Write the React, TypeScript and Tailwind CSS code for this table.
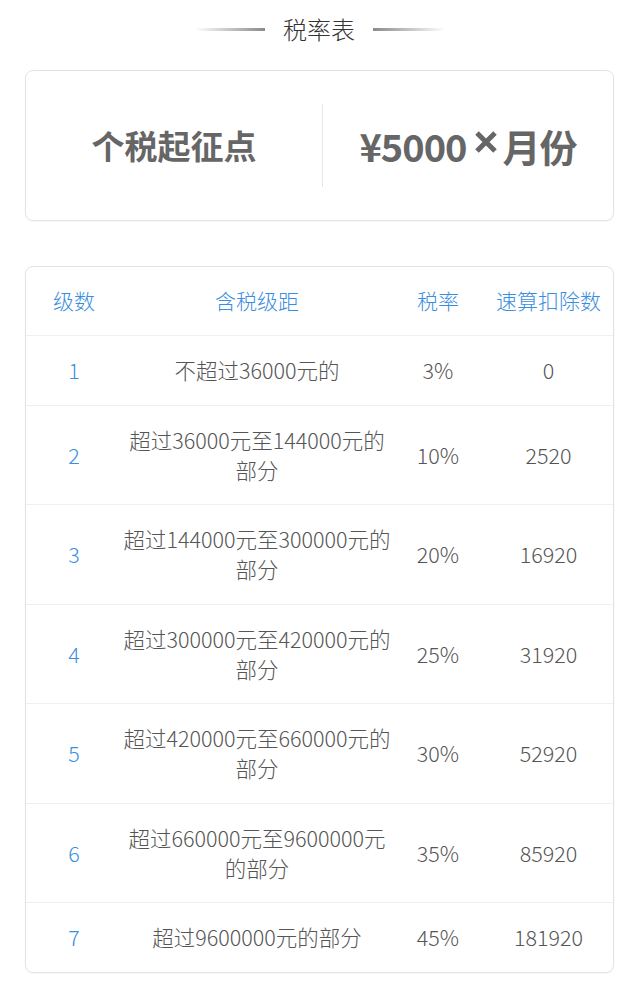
import React from 'react';

interface Bracket {
  level: number;
  range: string[];
  rate: string;
  deduction: string;
}

const brackets: Bracket[] = [
  { level: 1, range: ['不超过36000元的'], rate: '3%', deduction: '0' },
  { level: 2, range: ['超过36000元至144000元的', '部分'], rate: '10%', deduction: '2520' },
  { level: 3, range: ['超过144000元至300000元的', '部分'], rate: '20%', deduction: '16920' },
  { level: 4, range: ['超过300000元至420000元的', '部分'], rate: '25%', deduction: '31920' },
  { level: 5, range: ['超过420000元至660000元的', '部分'], rate: '30%', deduction: '52920' },
  { level: 6, range: ['超过660000元至9600000元', '的部分'], rate: '35%', deduction: '85920' },
  { level: 7, range: ['超过9600000元的部分'], rate: '45%', deduction: '181920' },
];

const font = { fontFamily: '"Noto Sans CJK SC", "Noto Sans", sans-serif' };

export default function App() {
  return (
    <div className="w-[640px] h-[990px] bg-white overflow-hidden" style={font}>
      {/* Title */}
      <div className="flex items-center justify-center h-[58px]">
        <div className="w-[70px] h-[3px] bg-gradient-to-r from-transparent to-[#8a8a8a]" />
        <div className="mx-[18px] text-[24px] leading-none text-[#333] font-light">税率表</div>
        <div className="w-[72px] h-[3px] bg-gradient-to-l from-transparent to-[#8a8a8a]" />
      </div>

      {/* Threshold card */}
      <div className="mt-[12px] ml-[25px] w-[589px] h-[151px] border border-[#e3e3e3] rounded-[8px] flex items-center shadow-[0_1px_2px_rgba(0,0,0,0.04)]">
        <div className="w-[296px] flex justify-center text-[33px] font-bold text-[#666] leading-none">
          个税起征点
        </div>
        <div className="w-px h-[83px] bg-[#e6e6e6]" />
        <div className="flex-1 flex justify-center items-center text-[38px] font-bold text-[#666] leading-none tracking-[-1px]">
          <span>¥5000</span>
          <svg
            width="22"
            height="22"
            viewBox="0 0 22 22"
            className="shrink-0 w-[22px] h-[22px] ml-[8px] mr-[6px] -mt-[7px]"
          >
            <path d="M2 2 L20 20 M20 2 L2 20" stroke="#666" strokeWidth="5" />
          </svg>
          <span>月份</span>
        </div>
      </div>

      {/* Rates table */}
      <div className="mt-[45px] ml-[25px] w-[589px] border border-[#e3e3e3] rounded-[8px] overflow-hidden shadow-[0_1px_2px_rgba(0,0,0,0.04)]">
        <div className="grid grid-cols-[96px_270px_92px_1fr] h-[68px] items-center text-[21px] font-light text-[#3a8ee0] text-center">
          <div>级数</div>
          <div>含税级距</div>
          <div>税率</div>
          <div>速算扣除数</div>
        </div>
        {brackets.map((b) => (
          <div
            key={b.level}
            className={`grid grid-cols-[96px_270px_92px_1fr] items-center text-center text-[21.5px] font-light border-t border-[#efefef] ${
              b.range.length > 1 ? 'h-[99.5px]' : 'h-[69.5px]'
            }`}
          >
            <div className="text-[#3a8ee0]">{b.level}</div>
            <div className="text-[#555] leading-[30px] whitespace-nowrap">
              {b.range.map((line) => (
                <div key={line}>{line}</div>
              ))}
            </div>
            <div className="text-[#555]">{b.rate}</div>
            <div className="text-[#555]">{b.deduction}</div>
          </div>
        ))}
      </div>
    </div>
  );
}
